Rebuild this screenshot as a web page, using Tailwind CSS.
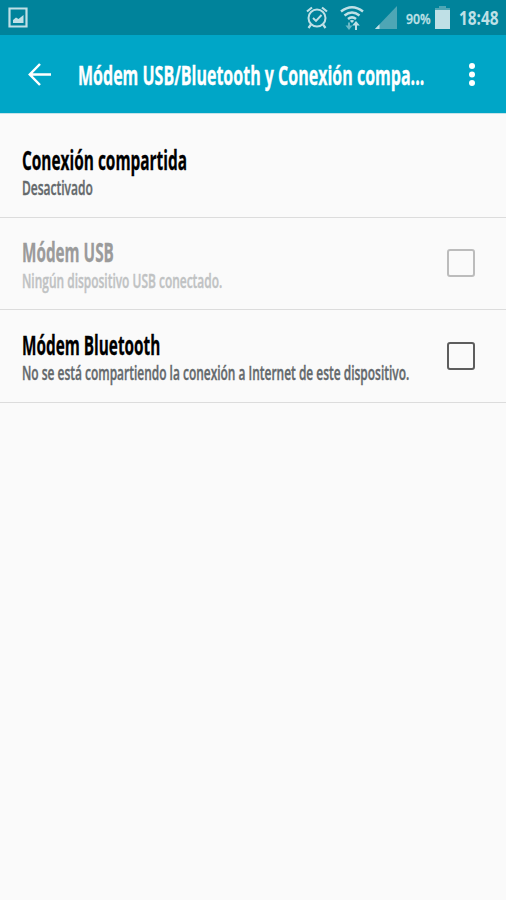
<!DOCTYPE html>
<html lang="es">
<head>
<meta charset="utf-8">
<title>Módem USB/Bluetooth y Conexión compartida</title>
<script src="https://cdn.jsdelivr.net/npm/@tailwindcss/browser@4"></script>
</head>
<body class="w-[506px] h-[900px] overflow-hidden bg-[#fafafa] font-['Open_Sans',sans-serif]">
<div class="flex h-[35px] items-center overflow-hidden bg-[#00839b] text-[#bfe0e6]">
  <svg class="ml-2 h-[22px] w-5 shrink-0" viewBox="0 0 20 22"><path fill="none" stroke="currentColor" stroke-width="2.200" d="M1.500 1.500h17v18h-17z"/><path fill="currentColor" d="M5 16v-3l3-2.500 2.500 1.500L15.500 8v8z"/></svg>
  <svg class="ml-[278px] h-6 w-6 shrink-0" viewBox="0 0 24 24" fill="none" stroke="currentColor"><circle cx="11" cy="12" r="8.500" stroke-width="2"/><path stroke-width="2.200" d="M1 5.500l5-4M16 1.500l5 4M5 18.500l-2.500 3.500M17 18.500l2.500 3.500"/><path stroke-width="1.900" d="M7 12l3 3 5.500-6"/></svg>
  <svg class="ml-2.5 h-[26px] w-6 shrink-0" viewBox="0 0 24 26" fill="none" stroke="currentColor" stroke-width="2.500"><path d="M1 6.500q11-8.500 22 0M4.500 10.500q7.500-6 15 0M8 14q4-3.200 8 0"/><path fill="currentColor" stroke="none" d="M12 18l-2.200-2.200q2.200-1.500 4.400 0z"/><path stroke="#6bb9c6" stroke-width="2" d="M9 17.500v5"/><path fill="#6bb9c6" stroke="none" d="M5.500 20.500h7L9 25z"/><path stroke-width="2" d="M16 19v6"/><path fill="currentColor" stroke="none" d="M12.200 20.500h7.600L16 16z"/></svg>
  <svg class="ml-[11px] h-[23px] w-[22px] shrink-0" viewBox="0 0 22 23"><path fill="#4ea6b5" d="M22 0v23H0z"/><path fill="currentColor" d="M4.500 18.300V23H0z"/></svg>
  <div class="ml-[9px] w-[26px]"><span class="inline-block origin-left scale-x-[.82] whitespace-nowrap text-[15px] leading-5 font-semibold [-webkit-text-stroke:.3px]">90%</span></div>
  <svg class="ml-[3px] h-[23px] w-[15px] shrink-0" viewBox="0 0 15 23"><path fill="#4ea6b5" d="M4 0h7v2h4v3H0V2h4z"/><path fill="currentColor" d="M0 4h15v19H0z"/></svg>
  <div class="ml-[9px] w-10 pt-0.5"><span class="inline-block origin-left scale-x-[.77] whitespace-nowrap text-[20px] leading-6 font-bold">18:48</span></div>
</div>
<header class="flex h-[79px] items-center border-b border-[#c5e3e9] bg-[#00a6c7] text-white">
  <svg class="ml-7 h-6 w-6 shrink-0" viewBox="0 0 24 24" fill="none" stroke="currentColor" stroke-width="2.500"><path d="M23 12.500H2.500M12 2L1.800 12.500 12 23"/></svg>
  <h1 class="ml-[26px] w-[350px] overflow-x-clip pt-0.5"><span class="inline-block origin-left scale-x-[.593] whitespace-nowrap text-[27px] leading-9 font-bold [-webkit-text-stroke:.35px]">Módem USB/Bluetooth y Conexión compa...</span></h1>
  <svg class="ml-[41px] h-6 w-1.5 shrink-0" viewBox="0 0 6 24" fill="currentColor"><circle cx="3" cy="4" r="3"/><circle cx="3" cy="12.500" r="3"/><circle cx="3" cy="21" r="3"/></svg>
</header>
<main class="overflow-x-clip">
  <section class="h-[104px] border-b border-[#dcdcdc] pt-[30px] pl-[22px]">
    <h2 class="h-8"><span class="inline-block origin-left scale-x-[.593] whitespace-nowrap text-[26px] leading-8 font-bold text-black [-webkit-text-stroke:.3px]">Conexión compartida</span></h2>
    <p class="h-6"><span class="inline-block origin-left scale-x-[.632] whitespace-nowrap text-[19px] leading-6 font-semibold text-[#64696c] [-webkit-text-stroke:.4px]">Desactivado</span></p>
  </section>
  <section class="flex h-[92px] items-start justify-between border-b border-[#dcdcdc] pt-[18px] pr-[31px] pl-[22px]">
    <div class="w-[400px]">
      <h2 class="h-[33px]"><span class="inline-block origin-left scale-x-[.588] whitespace-nowrap text-[26px] leading-8 font-bold text-[#9b9b9b] [-webkit-text-stroke:.3px]">Módem USB</span></h2>
      <p class="h-6"><span class="inline-block origin-left scale-x-[.629] whitespace-nowrap text-[19px] leading-6 font-semibold text-[#c0c2c3] [-webkit-text-stroke:.4px]">Ningún dispositivo USB conectado.</span></p>
    </div>
    <div class="mt-[13px] h-7 w-7 rounded-[3px] border-2 border-[#bcbcbc]"></div>
  </section>
  <section class="flex h-[93px] items-start justify-between border-b border-[#dcdcdc] pt-[19px] pr-[31px] pl-[22px]">
    <div class="w-[400px]">
      <h2 class="h-8"><span class="inline-block origin-left scale-x-[.59] whitespace-nowrap text-[26px] leading-8 font-bold text-black [-webkit-text-stroke:.3px]">Módem Bluetooth</span></h2>
      <p class="h-6"><span class="inline-block origin-left scale-x-[.629] whitespace-nowrap text-[19px] leading-6 font-semibold text-[#64696c] [-webkit-text-stroke:.4px]">No se está compartiendo la conexión a Internet de este dispositivo.</span></p>
    </div>
    <div class="mt-[13px] h-7 w-7 rounded-[3px] border-2 border-[#5d5d5d]"></div>
  </section>
</main>
</body>
</html>
